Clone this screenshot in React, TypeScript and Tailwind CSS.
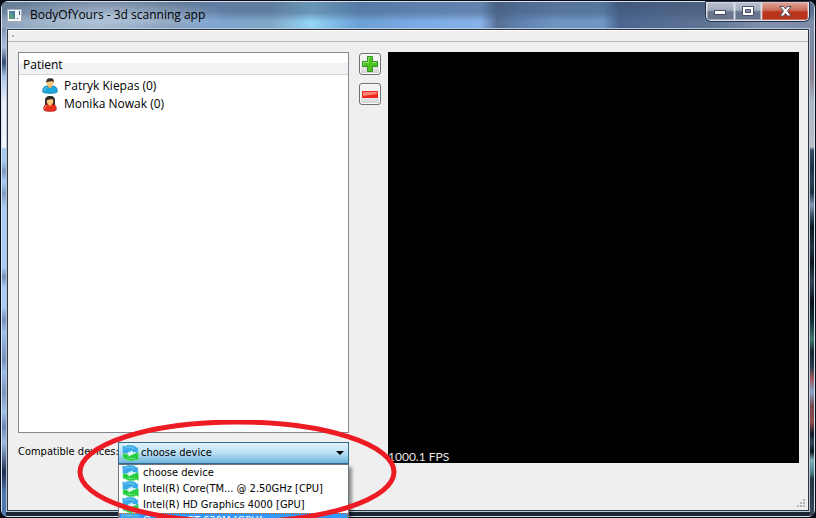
import React, { useState } from "react";

const patients = [
  { name: "Patryk Kiepas (0)", body: "#1ba6dc", edge: "#0c6fa8", female: false },
  { name: "Monika Nowak (0)", body: "#e8321f", edge: "#a81410", female: true },
];

const devices = [
  "choose device",
  "Intel(R) Core(TM... @ 2.50GHz [CPU]",
  "Intel(R) HD Graphics 4000 [GPU]",
  "GeForce GT 630M [GPU]",
];

function PersonIcon({ body, edge, female }: { body: string; edge: string; female: boolean }) {
  return (
    <svg width="16" height="16" viewBox="0 0 16 16" aria-hidden="true">
      {female && <path d="M3 11V4c0-5.500 10-5.500 10 0v7z" fill="#33272a" />}
      <path
        d={
          female
            ? "M1.800 14c-.3-4 .7-5.500 4.200-5.700h4c3.500.2 4.500 1.700 4.200 5.700-1 1.800-11.400 1.800-12.400 0z"
            : "M.8 14c-.3-4 1.200-6 5.200-6.200h4c4 .2 5.500 2.200 5.200 6.200-1 1.800-13.400 1.800-14.400 0z"
        }
        fill={body}
        stroke={edge}
        strokeWidth="0.7"
      />
      <path d="M5.800 7.500h4.400l-1 2.300c-.7.600-1.700.6-2.400 0z" fill="#eda54e" />
      <ellipse cx="8" cy="5" rx="3.300" ry="3.800" fill="#ffc779" />
      <path d="M4.400 5C3.800 1 6 0 8.500.200 11.300 0 12.300 2 11.600 5c-.5-1.500-1.300-1.800-2.300-2C7.500 4 5.500 3 4.400 5z" fill="#30292a" />
      <path d="M2.500 13c-.1-2 .7-3.200 2.500-3.500" fill="none" stroke="#fff" strokeOpacity="0.45" />
    </svg>
  );
}

function DeviceIcon() {
  return (
    <svg width="17" height="16" viewBox="0 0 17 16" aria-hidden="true" className="shrink-0">
      <path d="M.5.5L3 1.500c3-2 9-2 11.500 1L16 2.500V9l-7 1L.8 9z" fill="#39a8e8" stroke="#9bdaf6" strokeWidth="0.5" />
      <path d="M2.500 4c2-2 7-2.500 10 0" fill="none" stroke="#7ccdf6" />
      <path d="M16.500 15.500L14 14.500c-3 2-8.500 2-11-1L1 14V8.500l7.500.5 8-1.200z" fill="#24cc40" stroke="#8fe89c" strokeWidth="0.5" />
      <path d="M5 13c2 1 6 1 8-.5" fill="none" stroke="#6fe680" />
      <path d="M3 9l3.500-1V6.500l2 1V6l2-.5v1.700L14 7l-1 1.500-2.500.5v1.500l-2-1V11l-2 .5V9.500z" fill="#e6faf8" />
    </svg>
  );
}

function AppIcon() {
  return (
    <svg width="15" height="13" viewBox="0 0 15 13" aria-hidden="true">
      <rect x="0.500" y="0.500" width="14" height="12" fill="#f5f7f8" stroke="#a3acb5" />
      <rect x="2" y="2" width="6" height="8" fill="#4b7fa0" />
      <path d="M2 10V5l3-1 2 6z" fill="#5f9e78" />
      <path d="M12 2h1v4h-1zM10 9h1v1h-1z" fill="#354f9c" />
    </svg>
  );
}

const toolButton =
  "flex size-[22px] items-center justify-center rounded-[3px] border border-[#707070] bg-linear-to-b from-[#f3f3f3] from-50% to-[#cfcfcf] shadow-[inset_0_0_0_1px_#fafafa]";

const glassButton =
  "flex h-[18px] items-center justify-center border-r border-[#d9dfe8] bg-linear-to-b from-[#bcc2d2] from-0% via-[#a3abbd] via-45% to-[#69758d] to-55% shadow-[inset_0_0_0_1px_#ffffff55]";

export default function App() {
  const [device, setDevice] = useState(devices[0]);

  return (
    <div className="h-screen min-h-80 overflow-hidden bg-[#080b15] p-px font-['Open_Sans','Noto_Sans',sans-serif] text-[12px] text-black">
      <div className="relative flex h-full flex-col rounded-[7px] border border-[#d8e2ee] bg-[#1a2636]">
        <div className="absolute inset-y-0 left-0 w-1 rounded-l-[6px] bg-[linear-gradient(#566b85_0,#7d93b0_25px,#a9bfdc_45px,#334a72_60px,#a9c4e8_75px,#e9f0f8_100px,#f2f6fb_145px,#a5c8ee_147px,#a5c8ee_160px,#7b98bf_169px,#a9cdf5_180px,#7c9bc2_191px,#a8ccf4_205px,#a8ccf4_265px,#7290b7_275px,#a7cbf4_285px,#a7cbf4_305px,#7391ba_318px,#9cbfe9_330px,#728fb8_358px,#9bbde7_370px,#7893bb_390px,#9fc0e7_410px,#6786b1_425px,#9cbce3_440px,#1e2f50_470px,#4d76ab_490px,#4f78ad_512px)]" />
        <div className="absolute inset-y-0 right-0 w-1 rounded-r-[6px] bg-[linear-gradient(#8492ac_0,#79869f_50px,#8a8190_75px,#a9b5c6_100px,#b9c0c4_145px,#344a60_148px,#1d3043_165px,#2d4053_180px,#182c3b_190px,#8097b4_203px,#31475c_215px,#0b151c_225px,#213440_245px,#0d161c_260px,#344358_280px,#081014_300px,#163039_320px,#3f766a_337px,#15262d_350px,#29384c_365px,#a05a5c_377px,#87a5c8_390px,#77464b_404px,#8d4c4a_420px,#111a25_432px,#32475a_440px,#0c141d_450px,#7db0b8_458px,#4f838b_470px,#25323e_477px,#36485c_512px)]" />

        <header className="relative flex h-[26px] shrink-0 items-start rounded-t-[6px] bg-[radial-gradient(ellipse_120px_18px_at_110px_14px,#c3d4e6b0,#c3d4e600),linear-gradient(180deg,#35466170_0,#40587880_40%,#40587800_75%),linear-gradient(90deg,#8fa5bd_0,#9bb2ca_12%,#8199b6_20%,#7ea6d2_26%,#7fa6c6_33%,#92d4f6_38%,#6ba0d6_44%,#7dabe6_52%,#86b2e8_59%,#566f94_61%,#6083b3_64%,#6e94c1_68%,#6e97c8_74%,#4b6590_76%,#5f7595_87%,#8191ae_94%,#7c8aa5_100%)] pl-[5px]">
          <div className="flex h-[26px] flex-1 items-center gap-2">
            <AppIcon />
            <h1 className="text-[12px] leading-4">BodyOfYours - 3d scanning app</h1>
          </div>
          <div className="mr-[5px] flex overflow-hidden rounded-b-[5px] border border-t-0 border-[#dce2eb] shadow-[0_0_0_1px_#27324a]">
            <button aria-label="Minimize" className={`${glassButton} w-7`}>
              <svg width="13" height="12" viewBox="0 0 13 12"><rect x="0.500" y="5.500" width="11" height="4" fill="#fff" stroke="#49516a" /></svg>
            </button>
            <button aria-label="Maximize" className={`${glassButton} w-[27px]`}>
              <svg width="12" height="11" viewBox="0 0 12 11"><path d="M.5.5h11v9H.5zM3.500 3.500v3h5v-3z" fill="#fff" fillRule="evenodd" stroke="#49516a" /></svg>
            </button>
            <button aria-label="Close" className="flex h-[18px] w-[46px] items-center justify-center bg-linear-to-b from-[#dda89d] from-0% via-[#cb6d5a] via-45% to-[#b8351b] to-55% shadow-[inset_0_0_0_1px_#ffffff44]">
              <svg width="13" height="11" viewBox="0 0 13 11"><path d="M1 .5h3.500l2 2.500 2-2.500H12L8.500 5l3.500 5H8.500l-2-2.500-2 2.500H1l3.500-5z" fill="#fff" stroke="#545164" /></svg>
            </button>
          </div>
        </header>

        <div className="relative mx-1 mb-1 flex min-h-0 flex-1 flex-col border border-[#b9c7d6]">
          <div className="flex min-h-0 flex-1 flex-col border border-[#2d3642] bg-[#efefef]">
            <div role="toolbar" className="h-3 shrink-0 border-t border-b border-t-white border-b-[#b5b5b5] px-1 pt-1">
              <div className="size-0.5 bg-[#b5b5b5]" />
            </div>

            <main className="flex min-h-0 flex-1 pt-[10px] pr-[9px] pl-[10px]">
              <section className="flex min-w-0 flex-[331] flex-col gap-[9px]">
                <div className="min-h-0 flex-1 border border-[#828790] bg-white">
                  <div className="h-[22px] border-b border-[#d5d5d5] bg-linear-to-b from-white from-45% to-[#f1f2f4] to-50% px-1 leading-[23px]">Patient</div>
                  <ul className="pt-0.5">
                    {patients.map((p) => (
                      <li key={p.name} className="flex h-[18px] items-center gap-[6px] pl-[23px]">
                        <PersonIcon body={p.body} edge={p.edge} female={p.female} />
                        <span>{p.name}</span>
                      </li>
                    ))}
                  </ul>
                </div>

                <div className="flex h-[21px] items-center font-['DejaVu_Sans_Condensed','DejaVu_Sans',sans-serif] text-[11px]">
                  <label htmlFor="device" className="min-w-0 flex-1 whitespace-nowrap">Compatible devices:</label>
                  <div className="relative h-full w-[231px] shrink-0">
                    <select
                      id="device"
                      value={device}
                      onChange={(e) => setDevice(e.target.value)}
                      className="block h-[22px] w-full appearance-none border border-[#35698c] bg-linear-to-b from-[#e2f2fb] from-0% via-[#b9dff3] via-50% to-[#6cb4dd] pl-[22px] outline-none"
                    >
                      {devices.map((d) => (
                        <option key={d}>{d}</option>
                      ))}
                    </select>
                    <div className="pointer-events-none absolute top-[3px] left-1"><DeviceIcon /></div>
                    <svg className="pointer-events-none absolute top-[9px] right-[5px]" width="8" height="4" viewBox="0 0 8 4" aria-hidden="true"><path d="M0 0h8L4 4z" /></svg>
                    <ul role="listbox" aria-label="Compatible devices" className="absolute top-[22px] left-0 z-10 w-full border border-[#6b7580] bg-white shadow-[3px_3px_3px_#00000066]">
                      {devices.map((d, i) => (
                        <li
                          key={d}
                          role="option"
                          aria-selected={i === 3}
                          className={`flex h-4 items-center gap-1 pl-[3px] whitespace-nowrap ${i === 3 ? "bg-[#3399ff] text-white outline-1 -outline-offset-1 outline-dotted outline-[#cc6600]" : ""}`}
                        >
                          <DeviceIcon />
                          <span>{d}</span>
                        </li>
                      ))}
                    </ul>
                  </div>
                </div>
              </section>

              <div className="mr-[7px] ml-[10px] flex shrink-0 flex-col gap-2 pt-px">
                <button aria-label="Add patient" className={toolButton}>
                  <svg width="16" height="16" viewBox="0 0 16 16">
                    <path d="M5.500.5h5v5h5v5h-5v5h-5v-5h-5v-5h5z" fill="#4cc51f" stroke="#34902a" />
                    <path d="M6.500 6.500v-5h3M1.500 9V6.500h5M10 6.500h4.500" fill="none" stroke="#8fdc66" />
                  </svg>
                </button>
                <button aria-label="Remove patient" className={toolButton}>
                  <svg width="16" height="7" viewBox="0 0 16 7">
                    <path d="M0 0h16v7H0z" fill="#f0281b" />
                    <path d="M1 1h14v2L1 5z" fill="#ff8277" />
                  </svg>
                </button>
              </div>

              <section aria-label="3d view" className="flex min-w-0 flex-[411] items-end bg-black font-[Lato,sans-serif] text-[12px] leading-3 text-[#e6e6e6]">
                <span>1000.1 FPS</span>
              </section>
            </main>

            <footer className="flex h-[47px] shrink-0 items-end justify-end p-0.5">
              <svg width="9" height="9" viewBox="0 0 9 9" aria-hidden="true">
                <path d="M6 0h2v2H6zM3 3h2v2H3zM6 3h2v2H6zM0 6h2v2H0zM3 6h2v2H3zM6 6h2v2H6z" fill="#b4b4b4" />
              </svg>
            </footer>
          </div>
        </div>

        <svg className="pointer-events-none absolute top-[418px] left-[74px] z-20" width="324" height="108" viewBox="0 0 324 108" aria-hidden="true">
          <ellipse cx="161" cy="52" rx="157" ry="50" fill="none" stroke="#ed1c24" strokeWidth="5" />
        </svg>
      </div>
    </div>
  );
}
